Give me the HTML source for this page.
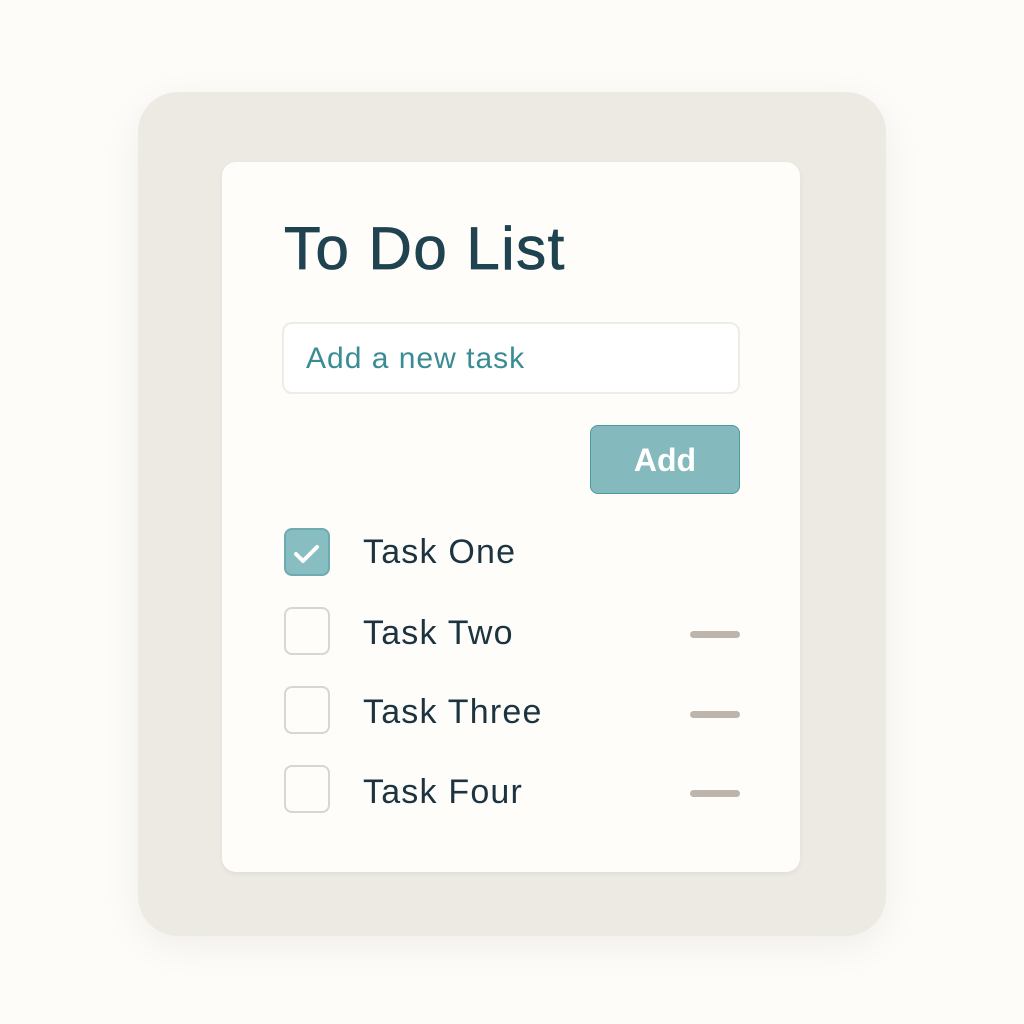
<!DOCTYPE html>
<html><head><style>
body{margin:0;width:1024px;height:1024px;background:#fdfcf8;font-family:"Liberation Sans",sans-serif;position:relative;overflow:hidden}
.outer{position:absolute;left:138px;top:92px;width:748px;height:844px;background:#edeae4;border-radius:40px;box-shadow:0 10px 40px rgba(0,0,0,0.06)}
.card{position:absolute;left:222px;top:162px;width:578px;height:710px;background:#fefdfa;border-radius:14px;box-shadow:0 2px 6px rgba(0,0,0,0.06)}
h1{position:absolute;left:284px;top:214px;margin:0;font-size:60px;font-weight:normal;color:#1f4350;letter-spacing:1.5px;-webkit-text-stroke:0.8px #1f4350}
.inp{position:absolute;left:282px;top:322px;width:458px;height:72px;border:2px solid #efece7;border-radius:10px;background:#fff;box-sizing:border-box}
.inp span{position:absolute;left:22px;top:18px;font-size:30px;color:#3a8c94;letter-spacing:1px}
.btn{position:absolute;left:590px;top:425px;width:150px;height:69px;background:#84babd;border:1px solid #4c9a9e;border-radius:8px;box-sizing:border-box;color:#fff;font-size:32px;font-weight:bold;text-align:center;line-height:69px}
.cb{position:absolute;left:284px;width:46px;height:48px;border:2px solid #d9d5cf;border-radius:8px;box-sizing:border-box;background:#fefdfa}
.cb.on{background:#88bec2;border-color:#6eabb0}
.t{position:absolute;left:363px;font-size:34px;color:#1c3340;letter-spacing:1.2px}
.d{position:absolute;left:690px;width:50px;height:7px;border-radius:4px;background:#bdb5ab}
</style></head><body>
<div class="outer"></div><div class="card"></div>
<h1>To Do List</h1>
<div class="inp"><span>Add a new task</span></div>
<div class="btn">Add</div>
<div class="cb on" style="top:528px"><svg width="42" height="44" viewBox="0 0 42 44"><path d="M10 24l7 7 14-14" stroke="#fff" stroke-width="4" fill="none" stroke-linecap="round" stroke-linejoin="round"/></svg></div>
<div class="t" style="top:533px">Task One</div>
<div class="cb" style="top:607px"></div><div class="t" style="top:614px">Task Two</div><div class="d" style="top:631px"></div>
<div class="cb" style="top:686px"></div><div class="t" style="top:693px">Task Three</div><div class="d" style="top:711px"></div>
<div class="cb" style="top:765px"></div><div class="t" style="top:773px">Task Four</div><div class="d" style="top:790px"></div>
</body></html>
